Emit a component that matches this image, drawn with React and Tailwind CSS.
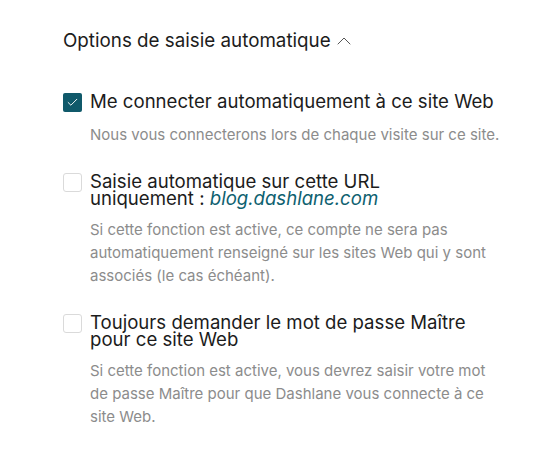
import { ChevronUp, Check } from 'lucide-react'

const options = [
  {
    id: 'autologin',
    checked: true,
    label: <>Me connecter automatiquement à ce site Web</>,
    help: 'Nous vous connecterons lors de chaque visite sur ce site.',
  },
  {
    id: 'onlyUrl',
    checked: false,
    label: (
      <>
        Saisie automatique sur cette URL{' '}
        <span className="whitespace-nowrap">
          uniquement :{' '}
          <span className="italic text-[#0e6170]">blog.dashlane.com</span>
        </span>
      </>
    ),
    help: 'Si cette fonction est active, ce compte ne sera pas automatiquement renseigné sur les sites Web qui y sont associés (le cas échéant).',
  },
  {
    id: 'masterPwd',
    checked: false,
    label: <>Toujours demander le mot de passe Maître pour ce site Web</>,
    help: 'Si cette fonction est active, vous devrez saisir votre mot de passe Maître pour que Dashlane vous connecte à ce site Web.',
  },
]

function Checkbox({ checked }) {
  if (checked) {
    return (
      <span className="flex h-[19px] w-[19px] shrink-0 items-center justify-center rounded-[2px] bg-[#10596a]">
        <Check className="h-[13px] w-[13px] text-white" strokeWidth={1.75} />
      </span>
    )
  }
  return <span className="block h-[19px] w-[19px] shrink-0 rounded-[3px] border border-[#dadada] bg-white" />
}

export default function App() {
  return (
    <div className="min-h-[451px] bg-white pl-[63px] pr-[30px] pt-[29px] font-['Inter',sans-serif] text-[#1c1c1c]">
      <button className="flex items-center text-[18.8px] leading-[24px]">
        Options de saisie automatique
        <ChevronUp className="ml-px h-6 w-6 text-[#555]" strokeWidth={1} />
      </button>

      <div className="mt-[40px] flex flex-col gap-[27px]">
        {options.map(opt => (
          <div key={opt.id} className="flex items-start gap-[8px]">
            <Checkbox checked={opt.checked} />
            <div className="w-[412px]">
              <div className="min-h-[19px] text-[18.6px] leading-[17px]">{opt.label}</div>
              <p className="mt-[11px] text-[15px] leading-[23px] text-[#8c8c8c]">{opt.help}</p>
            </div>
          </div>
        ))}
      </div>
    </div>
  )
}
